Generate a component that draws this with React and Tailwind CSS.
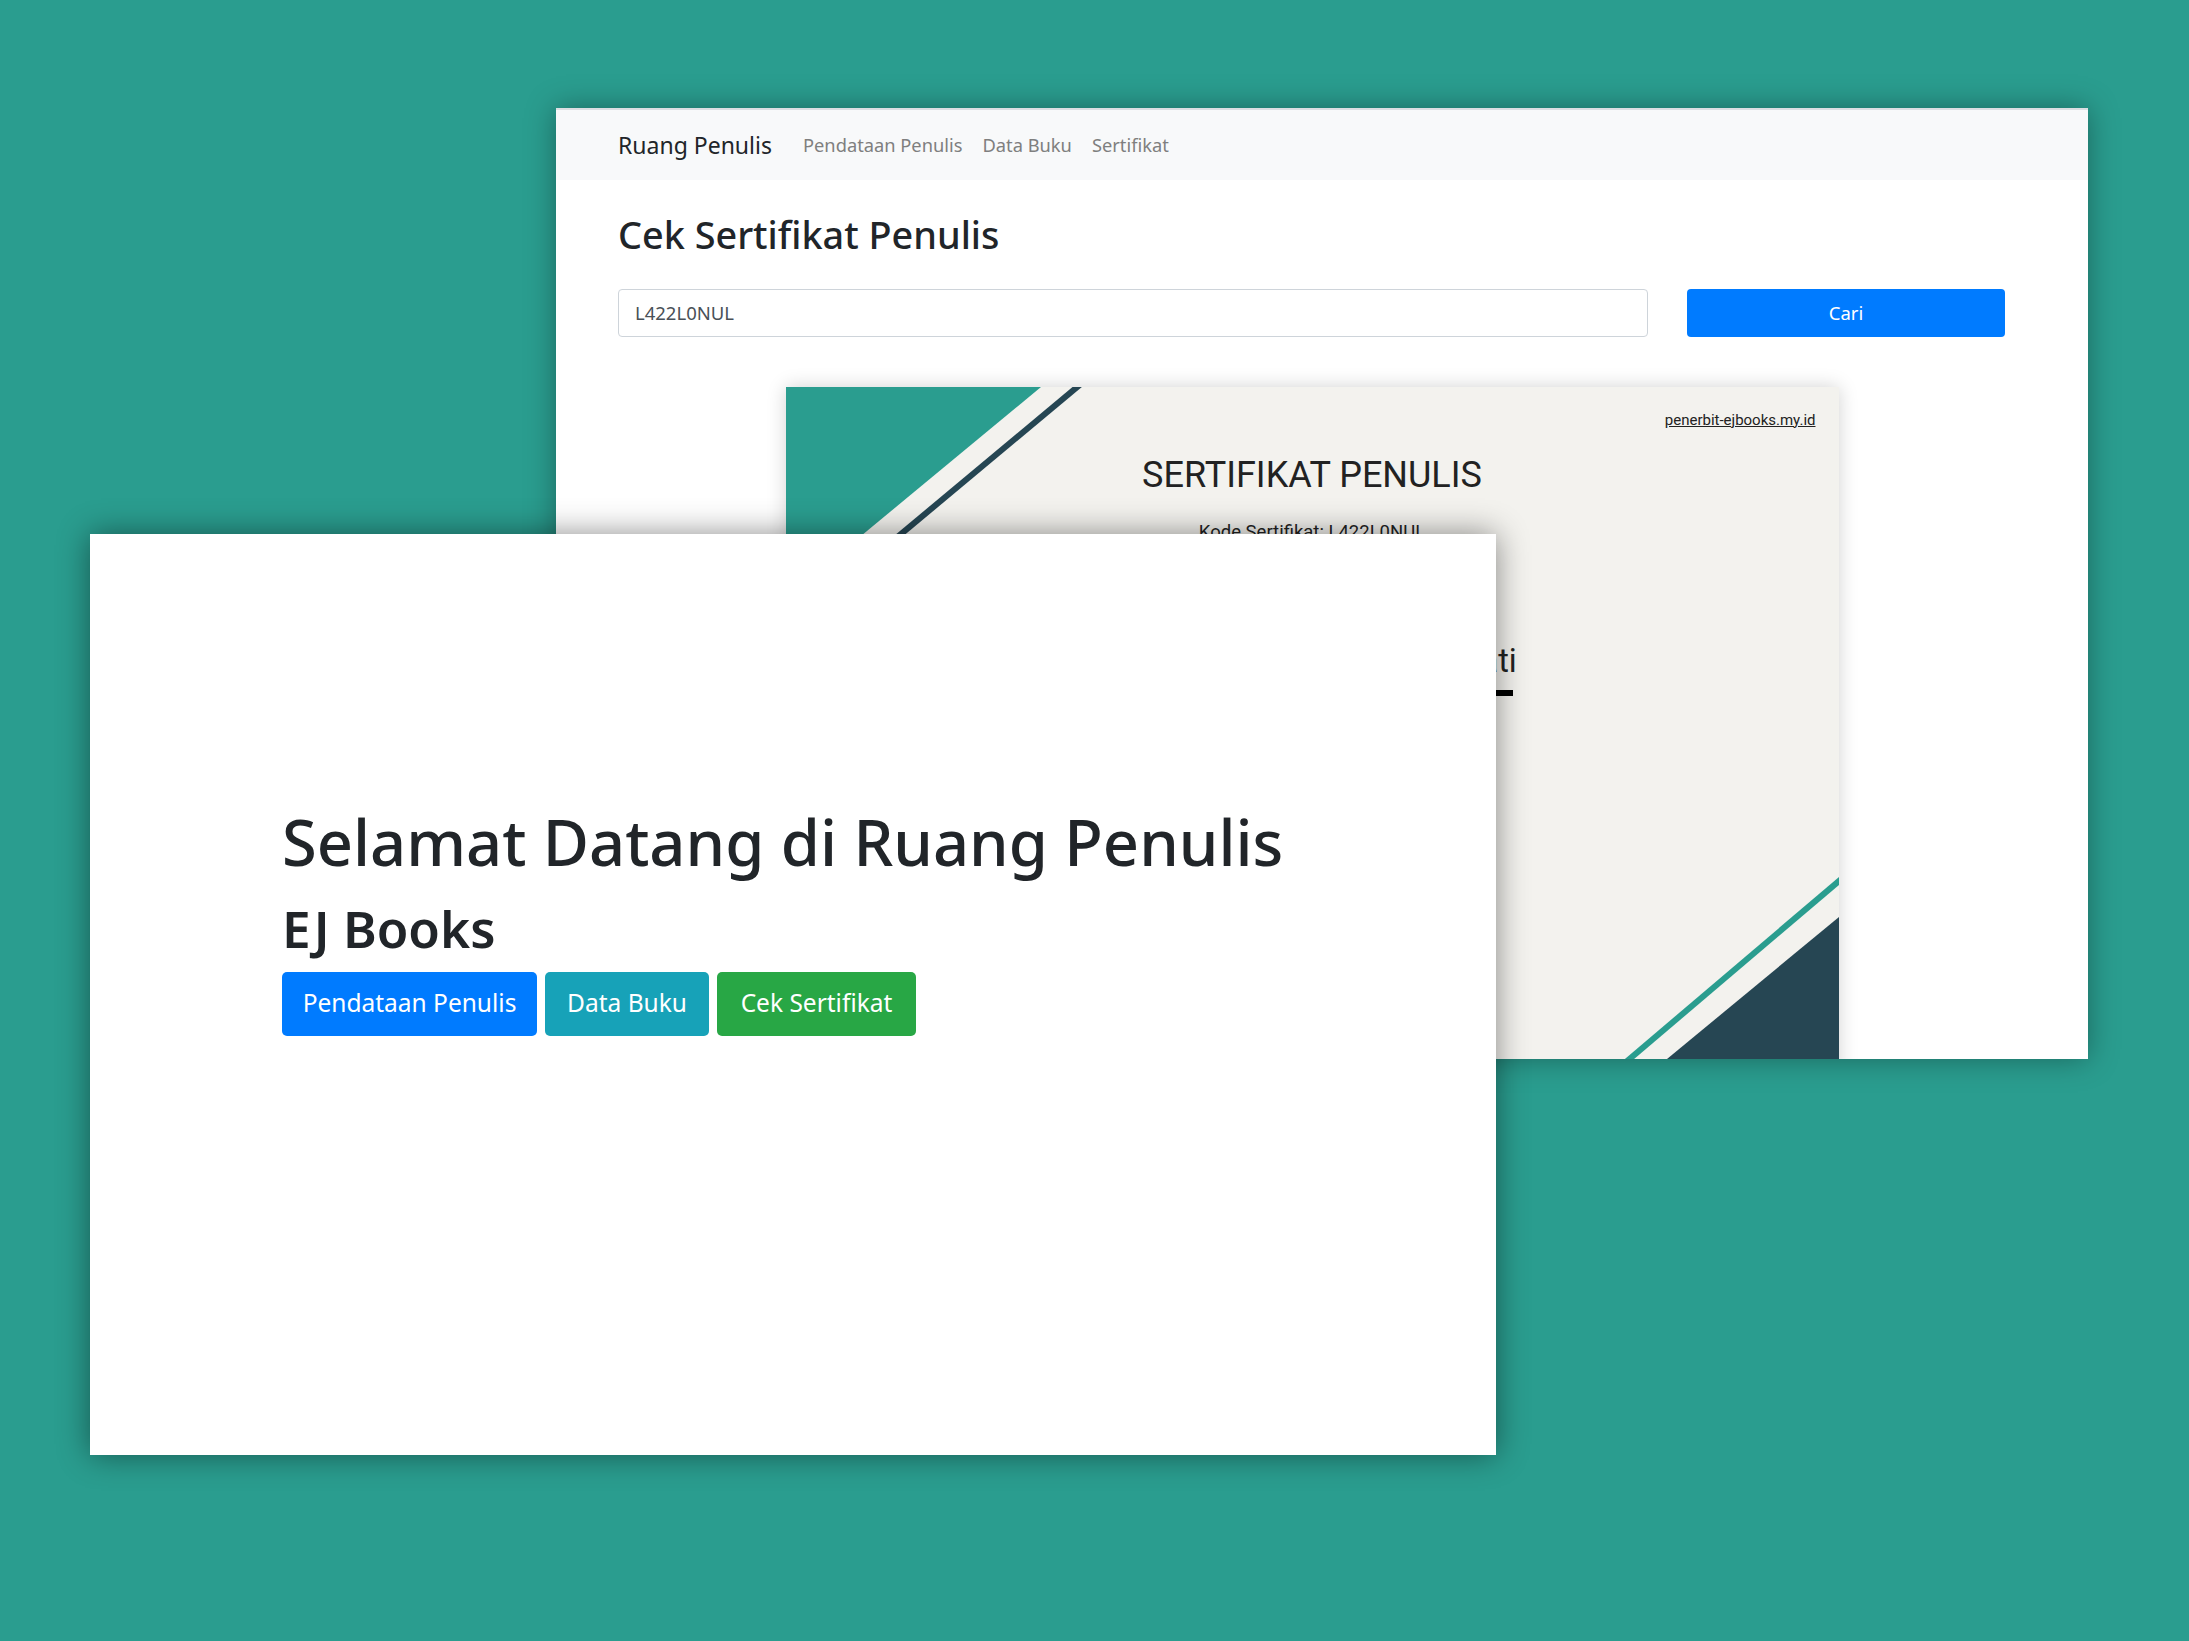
import React from 'react';

const sans = { fontFamily: '"Noto Sans", "Open Sans", sans-serif' };

const Certificate = () => {
  return (
    <div
      className="relative mx-auto w-[1053px] h-[760px] shrink-0 bg-[#f3f2ee] shadow-[0_0_18px_rgba(0,0,0,0.18)] font-['Roboto',sans-serif] text-[#222]"
    >
      {/* decorative stripes */}
      <svg className="absolute inset-0" width="1053" height="760" viewBox="0 0 1053 760">
        <polygon points="0,0 255,0 0,211" fill="#2a9d8f" />
        <line x1="296" y1="-4" x2="-6" y2="248" stroke="#264653" strokeWidth="6" />
        <line x1="1140" y1="420" x2="740" y2="760" stroke="#2a9d8f" strokeWidth="6" />
        <polygon points="1053,530 1053,800 726,800" fill="#264653" />
      </svg>

      <div className="relative flex flex-col">
        <div className="flex justify-end pt-[26px] pr-[23px]">
          <span className="text-[15px] leading-none underline">penerbit-ejbooks.my.id</span>
        </div>
        <h2 className="mt-[29px] text-center text-[36px] leading-none font-normal">SERTIFIKAT PENULIS</h2>
        <p className="mt-[30px] text-center text-[18.5px] leading-none">Kode Sertifikat: L422L0NUL</p>
        <p className="mt-[104px] text-center text-[32.5px] leading-none">Siti Nurhayati Sri Rahmawati</p>
        <div className="mx-auto mt-[12px] w-[402px] h-[6px] bg-black" />
      </div>
    </div>
  );
};

const CekSertifikatWindow = () => {
  return (
    <div
      className="absolute left-[556px] top-[108px] w-[1532px] h-[951px] bg-white overflow-hidden flex flex-col border-t-2 border-[#dcdee2] shadow-[0_0_28px_rgba(0,0,0,0.35)]"
      style={sans}
    >
      <nav className="h-[70px] shrink-0 bg-[#f8f9fa] flex items-center pl-[62px]">
        <span className="text-[23px] text-[#212529] mr-[31px]">Ruang Penulis</span>
        <div className="flex items-center gap-[20px] text-[18.3px] text-[#7f7f7f]">
          <span>Pendataan Penulis</span>
          <span>Data Buku</span>
          <span>Sertifikat</span>
        </div>
      </nav>

      <div className="flex flex-col pl-[62px] pr-[82px]">
        <h1 className="mt-[36px] text-[37.8px] leading-none font-medium text-[#212529]">
          Cek Sertifikat Penulis
        </h1>
        <div className="mt-[35px] flex items-center gap-[39px]">
          <div className="w-[1030px] h-[48px] border border-[#ced4da] rounded-[4px] flex items-center px-[16px] text-[18.5px] text-[#495057]">
            L422L0NUL
          </div>
          <button className="w-[318px] h-[48px] rounded-[4px] bg-[#007bff] text-white text-[18.5px]">
            Cari
          </button>
        </div>
        <div className="mt-[50px] flex">
          <Certificate />
        </div>
      </div>
    </div>
  );
};

const HomeWindow = () => {
  return (
    <div
      className="absolute left-[90px] top-[534px] w-[1406px] h-[921px] bg-white shadow-[0_0_30px_rgba(0,0,0,0.45)] flex flex-col pl-[192px]"
      style={sans}
    >
      <h1 className="mt-[276px] text-[63.2px] leading-none font-medium text-[#212529]">
        Selamat Datang di Ruang Penulis
      </h1>
      <h2 className="mt-[30px] text-[51.3px] leading-none font-semibold text-[#212529]">EJ Books</h2>
      <div className="mt-[17px] flex gap-[8px]">
        <button className="h-[64px] w-[255px] rounded-[5px] bg-[#007bff] text-white text-[24.5px]">
          Pendataan Penulis
        </button>
        <button className="h-[64px] w-[164px] rounded-[5px] bg-[#17a2b8] text-white text-[24.5px]">
          Data Buku
        </button>
        <button className="h-[64px] w-[199px] rounded-[5px] bg-[#28a745] text-white text-[24.5px]">
          Cek Sertifikat
        </button>
      </div>
    </div>
  );
};

export default function App() {
  return (
    <div className="relative w-[2189px] h-[1641px] bg-[#2a9d8f] overflow-hidden">
      <CekSertifikatWindow />
      <HomeWindow />
    </div>
  );
}
